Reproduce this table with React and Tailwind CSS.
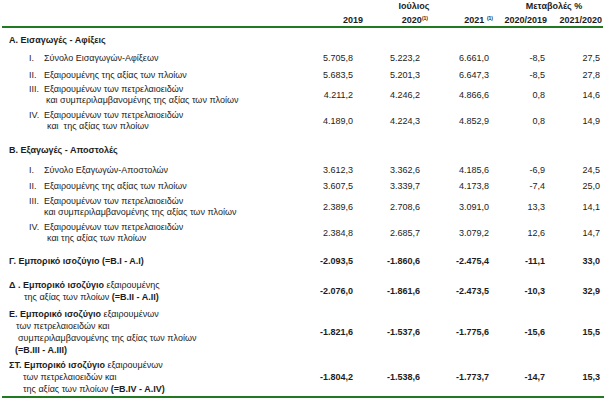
import React from "react";

const GRID = "grid grid-cols-[310px_43px_67px_69px_56px_55px] items-center";

function Values({ v, bold }) {
  return v.map((x, i) => (
    <div key={i} className={`text-right ${bold ? "font-bold" : ""}`}>{x}</div>
  ));
}

function SubRow({ mt, n, lines, v, indent2 }) {
  return (
    <div className={`${GRID} ${mt}`}>
      <div className="flex pl-[29px]">
        <span className="w-[15px] shrink-0">{n}</span>
        <div>
          {lines.map((l, i) => (
            <div key={i} className={`whitespace-pre ${i > 0 ? indent2 : ""}`}>{l}</div>
          ))}
        </div>
      </div>
      <Values v={v} />
    </div>
  );
}

function HeadRow({ mt, text }) {
  return (
    <div className={`${GRID} ${mt}`}>
      <div className="pl-[9px] font-bold">{text}</div>
    </div>
  );
}

export default function App() {
  return (
    <div
      className="w-[611px] h-[404px] bg-white text-[#1c1c1c] text-[9px] leading-[11px] overflow-hidden"
      style={{ fontFamily: '"Liberation Sans", Arial, sans-serif' }}
    >
      {/* Header */}
      <div className="h-[26px] pt-[1px] font-bold">
        <div className="grid grid-cols-[384px_60px_64px_92px] h-[12px]">
          <div />
          <div className="text-center">Ιούλιος</div>
          <div />
          <div className="text-center">Μεταβολές %</div>
        </div>
        <div className="grid grid-cols-[365px_65px_65px_55px_55px] mt-[2px] h-[11px]">
          <div className="text-right pr-[2px]">2019</div>
          <div className="text-right pr-[2px]">
            2020<span className="text-[5px] leading-[5px] align-[3px]">(1)</span>
          </div>
          <div className="text-right pr-[2px]">
            2021 <span className="text-[5px] leading-[5px] align-[3px]">(1)</span>
          </div>
          <div className="text-right pr-[3px]">2020/2019</div>
          <div className="text-right pr-[3px]">2021/2020</div>
        </div>
      </div>
      <div className="ml-[2px] w-[601px] h-[2px] bg-[#217a21]" />

      <HeadRow mt="mt-[7px]" text="Α. Εισαγωγές - Αφίξεις" />
      <SubRow mt="mt-[7px]" n="I." lines={["Σύνολο Εισαγωγών-Αφίξεων"]} v={["5.705,8", "5.223,2", "6.661,0", "-8,5", "27,5"]} />
      <SubRow mt="mt-[6px]" n="II." lines={["Εξαιρουμένης της αξίας των πλοίων"]} v={["5.683,5", "5.201,3", "6.647,3", "-8,5", "27,8"]} />
      <SubRow mt="mt-[3px]" n="III." lines={["Εξαιρουμένων των πετρελαιοειδών", "και συμπεριλαμβανομένης της αξίας των πλοίων"]} indent2="pl-[2px]" v={["4.211,2", "4.246,2", "4.866,6", "0,8", "14,6"]} />
      <SubRow mt="mt-[4px]" n="IV." lines={["Εξαιρουμένων των πετρελαιοειδών", "και  της αξίας των πλοίων"]} indent2="pl-[3px]" v={["4.189,0", "4.224,3", "4.852,9", "0,8", "14,9"]} />

      <HeadRow mt="mt-[13px]" text="Β. Εξαγωγές - Αποστολές" />
      <SubRow mt="mt-[9px]" n="I." lines={["Σύνολο Εξαγωγών-Αποστολών"]} v={["3.612,3", "3.362,6", "4.185,6", "-6,9", "24,5"]} />
      <SubRow mt="mt-[5px]" n="II." lines={["Εξαιρουμένης της αξίας των πλοίων"]} v={["3.607,5", "3.339,7", "4.173,8", "-7,4", "25,0"]} />
      <SubRow mt="mt-[4px]" n="III." lines={["Εξαιρουμένων των πετρελαιοειδών", "και συμπεριλαμβανομένης της αξίας των πλοίων"]} indent2="" v={["2.389,6", "2.708,6", "3.091,0", "13,3", "14,1"]} />
      <SubRow mt="mt-[4px]" n="IV." lines={["Εξαιρουμένων των πετρελαιοειδών", "και της αξίας των πλοίων"]} indent2="pl-[3px]" v={["2.384,8", "2.685,7", "3.079,2", "12,6", "14,7"]} />

      <div className={`${GRID} mt-[12px]`}>
        <div className="pl-[9px] font-bold">Γ. Εμπορικό ισοζύγιο (=B.I - A.I)</div>
        <Values bold v={["-2.093,5", "-1.860,6", "-2.475,4", "-11,1", "33,0"]} />
      </div>

      <div className={`${GRID} mt-[12px] leading-[12px]`}>
        <div className="pl-[9px]">
          <div><b>Δ . Εμπορικό ισοζύγιο</b> εξαιρουμένης</div>
          <div className="pl-[15px]">της αξίας των πλοίων <b>(=B.II - A.II)</b></div>
        </div>
        <Values bold v={["-2.076,0", "-1.861,6", "-2.473,5", "-10,3", "32,9"]} />
      </div>

      <div className={`${GRID} mt-[5px] leading-[12px]`}>
        <div className="pl-[9px]">
          <div><b>Ε. Εμπορικό ισοζύγιο</b> εξαιρουμένων</div>
          <div className="pl-[7px]">των πετρελαιοειδών και</div>
          <div className="pl-[9px]">συμπεριλαμβανομένης της αξίας των πλοίων</div>
          <div className="pl-[6px] font-bold">(=B.III - A.III)</div>
        </div>
        <Values bold v={["-1.821,6", "-1.537,6", "-1.775,6", "-15,6", "15,5"]} />
      </div>

      <div className={`${GRID} mt-[3px] leading-[12px]`}>
        <div className="pl-[9px]">
          <div><b>ΣΤ. Εμπορικό ισοζύγιο</b> εξαιρουμένων</div>
          <div className="pl-[14px]">των πετρελαιοειδών και</div>
          <div className="pl-[14px]">της αξίας των πλοίων <b>(=B.IV - A.IV)</b></div>
        </div>
        <Values bold v={["-1.804,2", "-1.538,6", "-1.773,7", "-14,7", "15,3"]} />
      </div>

      <div className="mt-[1px] ml-[2px] w-[602px] h-[2px] bg-[#217a21]" />
    </div>
  );
}
